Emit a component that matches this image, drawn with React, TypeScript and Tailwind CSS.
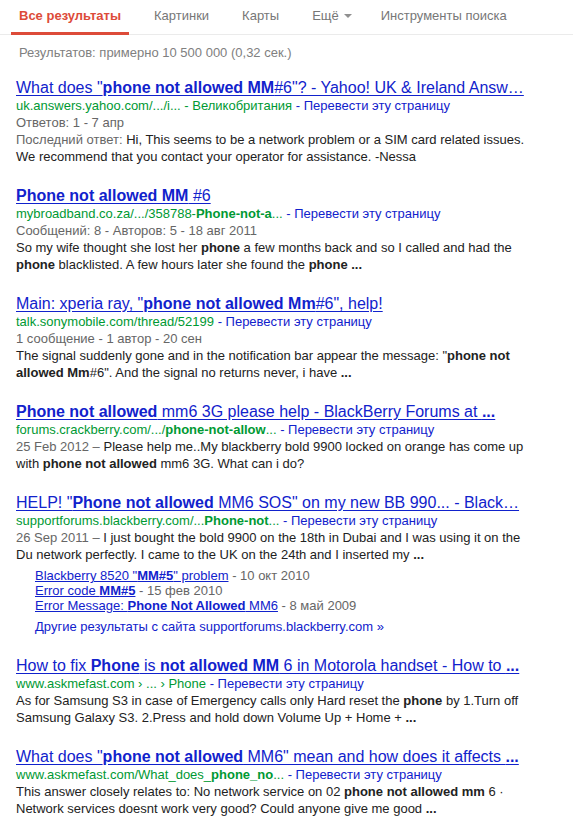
import { ReactNode } from "react";

const tabs = ["Картинки", "Карты"];

function Title({ children }: { children: ReactNode }) {
  return (
    <a href="#" className="block whitespace-nowrap text-[16px] leading-[18px] text-[#1122cc] underline decoration-[#1122cc] underline-offset-[2px]">
      {children}
    </a>
  );
}

function Url({ children }: { children: ReactNode }) {
  return (
    <div className="whitespace-nowrap text-[13px] leading-[17px]">
      <span className="text-[#009933]">{children}</span>
      <span className="text-[#1122cc]"> - Перевести эту страницу</span>
    </div>
  );
}

function Meta({ children }: { children: ReactNode }) {
  return <div className="text-[13px] leading-[17px] text-[#666]">{children}</div>;
}

function Snippet({ children }: { children: ReactNode }) {
  return <div className="whitespace-nowrap text-[13px] leading-[17px] text-[#222]">{children}</div>;
}

export default function App() {
  return (
    <div className="min-h-[819px] bg-white font-['Liberation_Sans',Arial,sans-serif]">
      {/* Tabs */}
      <nav className="flex h-[35px] items-start gap-[17px] border-b border-[#ebebeb] pl-[11px] text-[13px]">
        <div className="-mb-px h-[35px] border-b-[3px] border-[#dd4b39] px-[8px] pt-[8px] leading-[15px] font-bold text-[#dd4b39]">
          Все результаты
        </div>
        {tabs.map((t) => (
          <div key={t} className="px-[8px] pt-[8px] leading-[15px] text-[#777]">
            {t}
          </div>
        ))}
        <div className="flex items-center gap-[5px] px-[8px] pt-[8px] leading-[15px] text-[#777]">
          Ещё
          <span className="mt-px h-0 w-0 border-x-[4px] border-t-[4px] border-x-transparent border-t-[#909090]"></span>
        </div>
        <div className="px-[4px] pt-[8px] leading-[15px] text-[#777]">Инструменты поиска</div>
      </nav>

      <div className="mb-[18px] mt-[9px] pl-[19px] text-[13px] leading-[17px] text-[#808080]">
        Результатов: примерно 10 500 000 (0,32 сек.)
      </div>

      <div className="flex flex-col gap-[22px] pl-[16px]">
        <div>
          <Title>
            What does "<b>phone not allowed MM</b>#6"? - Yahoo! UK &amp; Ireland Answ…
          </Title>
          <Url>uk.answers.yahoo.com/.../i... - Великобритания</Url>
          <Meta>Ответов: 1 - 7 апр</Meta>
          <Snippet>
            <span className="text-[#666]">Последний ответ:</span> Hi, This seems to be a network problem or a SIM card related issues.
            <br />
            We recommend that you contact your operator for assistance. -Nessa
          </Snippet>
        </div>

        <div>
          <Title>
            <b>Phone not allowed MM</b> #6
          </Title>
          <Url>
            mybroadband.co.za/.../358788-<b>Phone-not-a</b>...
          </Url>
          <Meta>Сообщений: 8 - Авторов: 5 - 18 авг 2011</Meta>
          <Snippet>
            So my wife thought she lost her <b>phone</b> a few months back and so I called and had the
            <br />
            <b>phone</b> blacklisted. A few hours later she found the <b>phone ...</b>
          </Snippet>
        </div>

        <div>
          <Title>
            Main: xperia ray, "<b>phone not allowed Mm</b>#6", help!
          </Title>
          <Url>talk.sonymobile.com/thread/52199</Url>
          <Meta>1 сообщение - 1 автор - 20 сен</Meta>
          <Snippet>
            The signal suddenly gone and in the notification bar appear the message: "<b>phone not</b>
            <br />
            <b>allowed Mm</b>#6". And the signal no returns never, i have <b>...</b>
          </Snippet>
        </div>

        <div>
          <Title>
            <b>Phone not allowed</b> mm6 3G please help - BlackBerry Forums at <b>...</b>
          </Title>
          <Url>
            forums.crackberry.com/.../<b>phone-not-allow</b>...
          </Url>
          <Snippet>
            <span className="text-[#666]">25 Feb 2012 –</span> Please help me..My blackberry bold 9900 locked on orange has come up
            <br />
            with <b>phone not allowed</b> mm6 3G. What can i do?
          </Snippet>
        </div>

        <div>
          <Title>
            HELP! "<b>Phone not allowed</b> MM6 SOS" on my new BB 990... - Black…
          </Title>
          <Url>
            supportforums.blackberry.com/...<b>Phone-not</b>...
          </Url>
          <Snippet>
            <span className="text-[#666]">26 Sep 2011 –</span> I just bought the bold 9900 on the 18th in Dubai and I was using it on the
            <br />
            Du network perfectly. I came to the UK on the 24th and I inserted my <b>...</b>
          </Snippet>
          <div className="mt-[5px] pl-[19px] text-[13px] leading-[15px] text-[#666]">
            <div>
              <a href="#" className="text-[#1122cc] underline">
                Blackberry 8520 "<b>MM#5</b>" problem
              </a>{" "}
              - 10 окт 2010
            </div>
            <div>
              <a href="#" className="text-[#1122cc] underline">
                Error code <b>MM#5</b>
              </a>{" "}
              - 15 фев 2010
            </div>
            <div>
              <a href="#" className="text-[#1122cc] underline">
                Error Message: <b>Phone Not Allowed</b> MM6
              </a>{" "}
              - 8 май 2009
            </div>
            <div className="mt-[5px] leading-[17px] text-[#1122cc]">
              Другие результаты с сайта supportforums.blackberry.com »
            </div>
          </div>
        </div>

        <div>
          <Title>
            How to fix <b>Phone</b> is <b>not allowed MM</b> 6 in Motorola handset - How to <b>...</b>
          </Title>
          <Url>www.askmefast.com › ... › Phone</Url>
          <Snippet>
            As for Samsung S3 in case of Emergency calls only Hard reset the <b>phone</b> by 1.Turn off
            <br />
            Samsung Galaxy S3. 2.Press and hold down Volume Up + Home + <b>...</b>
          </Snippet>
        </div>

        <div>
          <Title>
            What does "<b>phone not allowed</b> MM6" mean and how does it affects <b>...</b>
          </Title>
          <Url>
            www.askmefast.com/What_does_<b>phone_no</b>...
          </Url>
          <Snippet>
            This answer closely relates to: No network service on 02 <b>phone not allowed mm</b> 6 ·
            <br />
            Network services doesnt work very good? Could anyone give me good <b>...</b>
          </Snippet>
        </div>
      </div>
    </div>
  );
}
